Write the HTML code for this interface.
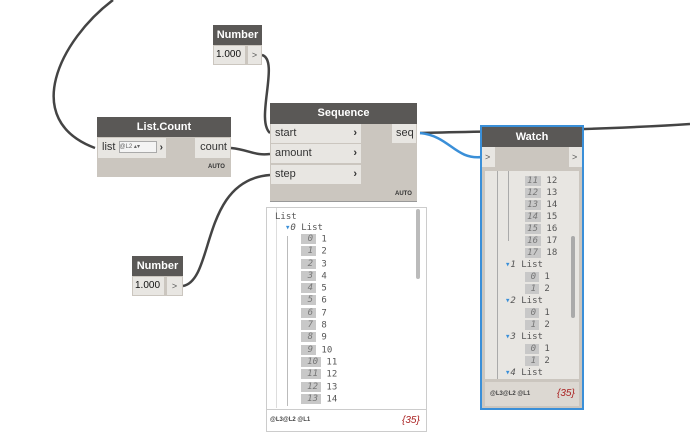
<!DOCTYPE html>
<html><head><style>
*{margin:0;padding:0;box-sizing:border-box}
body{width:690px;height:440px;background:#fff;position:relative;overflow:hidden;font-family:"Liberation Sans","DejaVu Sans",sans-serif}
.a{position:absolute}
.hd{background:#5a5856;color:#fff;font-weight:bold;font-size:11px;text-align:center;line-height:20px}
.bd{background:#cbc6bf}
.port{background:#e8e6e2;color:#333;font-size:11px;line-height:19px;padding-left:4px}
.mono{font-family:"DejaVu Sans Mono","Liberation Mono",monospace;font-size:9px;color:#555}
.ix{background:#c8c8c8;color:#777;font-style:italic;text-align:right;padding-right:3px;display:inline-block;height:10px;line-height:10px;vertical-align:middle}
.auto{font-size:6px;font-weight:bold;color:#333}
</style></head><body>
<svg class="a" style="left:0;top:0" width="690" height="440">
<g fill="none" stroke="#444" stroke-width="2.5">
<path d="M113,0 C60,40 20,120 95,148"/>
<path d="M262,55 C280,60 255,120 270,133"/>
<path d="M231,148 C250,150 255,156 270,154"/>
<path d="M183,286 C215,280 200,180 270,175"/>
<path d="M420,133 C500,131 600,130 690,124"/>
</g>
<path d="M420,133 C450,136 455,160 482,157" fill="none" stroke="#3a8fd8" stroke-width="2.5"/>
</svg>

<div class="a hd" style="left:213px;top:25px;width:49px;height:20px">Number</div>
<div class="a" style="left:213px;top:45px;width:49px;height:20px;background:#cbc6bf"></div>
<div class="a port" style="left:214px;top:46px;width:31px;height:18px;line-height:18px;padding-left:2px;font-size:10px;color:#111">1.000</div>
<div class="a" style="left:248px;top:46px;width:13px;height:18px;background:#e8e6e2;font-size:9px;color:#555;line-height:18px;text-align:center">&gt;</div>

<div class="a hd" style="left:132px;top:256px;width:51px;height:20px">Number</div>
<div class="a" style="left:132px;top:276px;width:51px;height:20px;background:#cbc6bf"></div>
<div class="a port" style="left:133px;top:277px;width:31px;height:18px;line-height:18px;padding-left:2px;font-size:10px;color:#111">1.000</div>
<div class="a" style="left:167px;top:277px;width:15px;height:18px;background:#e8e6e2;font-size:9px;color:#555;line-height:18px;text-align:center">&gt;</div>

<div class="a hd" style="left:97px;top:117px;width:134px;height:20px">List.Count</div>
<div class="a bd" style="left:97px;top:137px;width:134px;height:40px"></div>
<div class="a port" style="left:98px;top:138px;width:68px;height:20px">list <span style="display:inline-block;width:38px;height:12px;border:1px solid #aaa;background:#f4f4f4;font-size:6px;line-height:10px;vertical-align:middle;color:#666">@L2 ▴▾</span> <b style="font-size:10px">›</b></div>
<div class="a port" style="left:195px;top:138px;width:35px;height:20px;text-align:right;padding-right:3px">count</div>
<div class="a auto" style="left:208px;top:164px">AUTO</div>

<div class="a hd" style="left:270px;top:103px;width:147px;height:21px;line-height:21px">Sequence</div>
<div class="a bd" style="left:270px;top:124px;width:147px;height:78px;border-bottom:1px solid #999"></div>
<div class="a port" style="left:271px;top:124px;width:90px;height:19px">start<b style="position:absolute;right:4px">›</b></div>
<div class="a port" style="left:271px;top:144px;width:90px;height:19px">amount<b style="position:absolute;right:4px">›</b></div>
<div class="a port" style="left:271px;top:165px;width:90px;height:19px">step<b style="position:absolute;right:4px">›</b></div>
<div class="a port" style="left:392px;top:124px;width:24px;height:19px">seq</div>
<div class="a auto" style="left:395px;top:191px">AUTO</div>

<div class="a" style="left:266px;top:207px;width:161px;height:225px;border:1px solid #ccc;background:#fff"></div>
<div class="a" style="left:267px;top:409px;width:159px;height:1px;background:#ccc"></div>
<div class="a" style="left:416px;top:209px;width:4px;height:70px;background:#bbb;border-radius:2px"></div>
<div class="a" style="left:276px;top:208px;width:1px;height:200px;background:#ddd"></div>
<div class="a" style="left:287px;top:236px;width:1px;height:170px;background:#bbb"></div>
<div class="a mono" style="left:275px;top:212px">List</div>
<div class="a mono" style="left:285px;top:223px"><span style="color:#3a8fd8">▾</span><i>0</i> List</div>
<div class="a mono" style="left:301px;top:234px;line-height:11.8px">
<div><span class="ix" style="width:15px">0</span> 1</div><div><span class="ix" style="width:15px">1</span> 2</div><div><span class="ix" style="width:15px">2</span> 3</div><div><span class="ix" style="width:15px">3</span> 4</div><div><span class="ix" style="width:15px">4</span> 5</div><div><span class="ix" style="width:15px">5</span> 6</div><div><span class="ix" style="width:15px">6</span> 7</div><div><span class="ix" style="width:15px">7</span> 8</div><div><span class="ix" style="width:15px">8</span> 9</div><div><span class="ix" style="width:15px">9</span> 10</div><div><span class="ix" style="width:20px">10</span> 11</div><div><span class="ix" style="width:20px">11</span> 12</div><div><span class="ix" style="width:20px">12</span> 13</div><div><span class="ix" style="width:20px">13</span> 14</div>
</div>
<div class="a" style="left:270px;top:417px;font-size:6px;font-weight:bold;color:#444">@L3@L2 @L1</div>
<div class="a" style="left:402px;top:415px;font-size:10px;color:#a22;font-style:italic">{35}</div>

<div class="a" style="left:480px;top:125px;width:104px;height:285px;border:2px solid #3a8fd8;background:#cbc6bf"></div>
<div class="a hd" style="left:482px;top:127px;width:100px;height:20px">Watch</div>
<div class="a" style="left:482px;top:147px;width:13px;height:20px;background:#e8e6e2;font-size:9px;color:#555;line-height:20px;padding-left:3px">&gt;</div>
<div class="a" style="left:569px;top:147px;width:13px;height:20px;background:#e8e6e2;font-size:9px;color:#555;line-height:20px;padding-left:3px">&gt;</div>
<div class="a" style="left:485px;top:171px;width:94px;height:208px;background:#e8e6e2;overflow:hidden">
 <div class="a" style="left:12px;top:0;width:1px;height:208px;background:#aaa"></div>
 <div class="a" style="left:23px;top:0;width:1px;height:70px;background:#aaa"></div>
 <div class="a" style="left:86px;top:65px;width:4px;height:82px;background:#aaa;border-radius:2px"></div>
 <div class="a mono" style="left:40px;top:4px;line-height:12px">
 <div><span class="ix" style="width:16px">11</span> 12</div><div><span class="ix" style="width:16px">12</span> 13</div><div><span class="ix" style="width:16px">13</span> 14</div><div><span class="ix" style="width:16px">14</span> 15</div><div><span class="ix" style="width:16px">15</span> 16</div><div><span class="ix" style="width:16px">16</span> 17</div><div><span class="ix" style="width:16px">17</span> 18</div>
 </div>
 <div class="a mono" style="left:20px;top:88px;line-height:12px">
 <div><span style="color:#3a8fd8">▾</span><i>1</i> List</div>
 <div style="padding-left:20px"><span class="ix" style="width:14px">0</span> 1</div><div style="padding-left:20px"><span class="ix" style="width:14px">1</span> 2</div>
 <div><span style="color:#3a8fd8">▾</span><i>2</i> List</div>
 <div style="padding-left:20px"><span class="ix" style="width:14px">0</span> 1</div><div style="padding-left:20px"><span class="ix" style="width:14px">1</span> 2</div>
 <div><span style="color:#3a8fd8">▾</span><i>3</i> List</div>
 <div style="padding-left:20px"><span class="ix" style="width:14px">0</span> 1</div><div style="padding-left:20px"><span class="ix" style="width:14px">1</span> 2</div>
 <div><span style="color:#3a8fd8">▾</span><i>4</i> List</div>
 </div>
</div>
<div class="a" style="left:485px;top:382px;width:94px;height:24px;background:#dcd8d2"></div>
<div class="a" style="left:490px;top:391px;font-size:6px;font-weight:bold;color:#444">@L3@L2 @L1</div>
<div class="a" style="left:557px;top:388px;font-size:10px;color:#a22;font-style:italic">{35}</div>
</body></html>
